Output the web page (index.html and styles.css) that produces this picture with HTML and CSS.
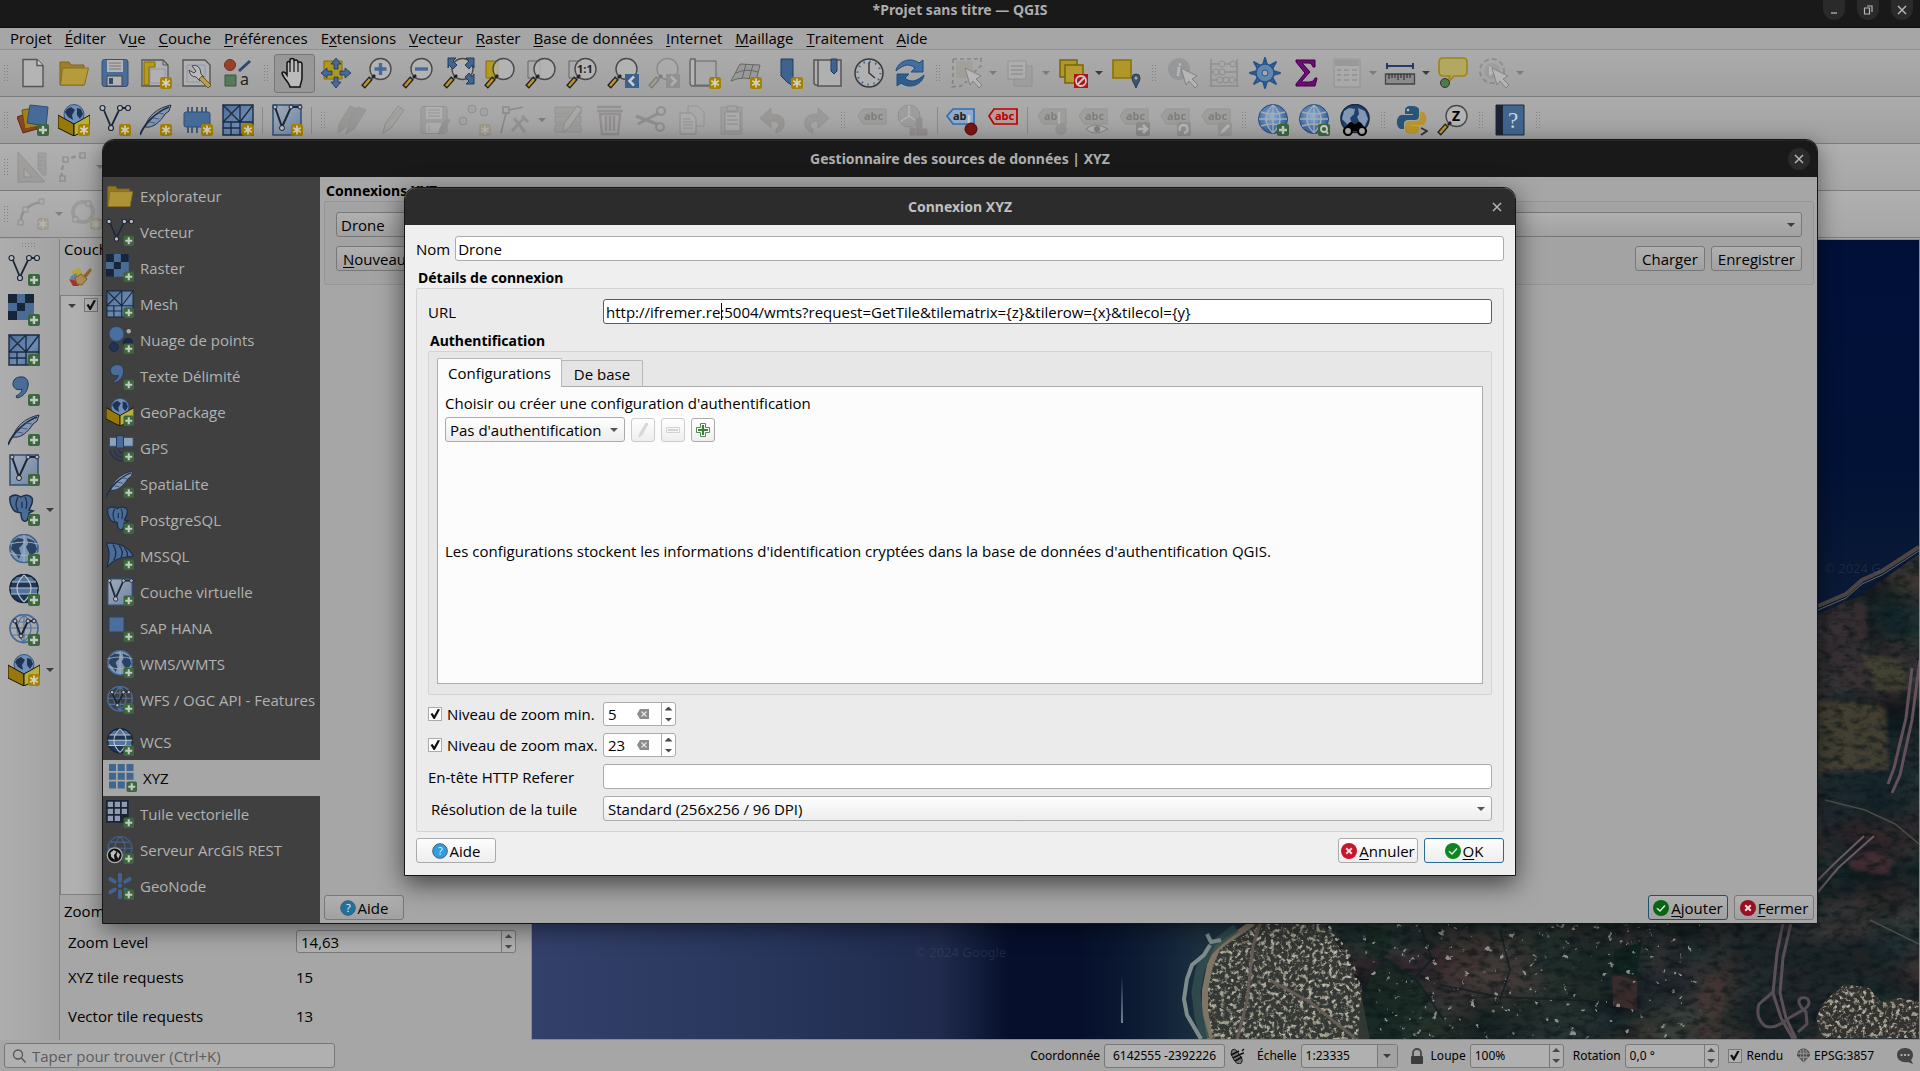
FILE: index.html
```html
<!DOCTYPE html>
<html lang="fr">
<head>
<meta charset="utf-8">
<title>*Projet sans titre — QGIS</title>
<link rel="stylesheet" href="styles.css">
</head>
<body>
<svg class="sprite" aria-hidden="true">
  <defs>
    <linearGradient id="g-blue" x1="0" y1="0" x2="1" y2="1"><stop offset="0" stop-color="#4a6c98"/><stop offset=".6" stop-color="#6d8bb0"/><stop offset="1" stop-color="#3f628e"/></linearGradient>
    <linearGradient id="g-pale" x1="0" y1="0" x2="1" y2="1"><stop offset="0" stop-color="#a3acb8"/><stop offset="1" stop-color="#6d84a4"/></linearGradient>
    <radialGradient id="g-globe" cx=".45" cy=".4" r=".6"><stop offset="0" stop-color="#8fb0d8"/><stop offset="1" stop-color="#2c5a92"/></radialGradient>
  </defs>

  <symbol id="b-plus" viewBox="0 0 32 32"><rect x="20" y="20" width="12" height="12" rx="2" fill="#3c663c"/><path d="M26 22v8M22 26h8" stroke="#c3cac3" stroke-width="2.4"/></symbol>
  <symbol id="b-star" viewBox="0 0 32 32"><rect x="20" y="20" width="12" height="12" rx="2.5" fill="#a58200"/><path d="M26 21.6v8.8M22.2 23.8l7.6 4.4M29.8 23.8l-7.6 4.4" stroke="#d3d0bd" stroke-width="1.8"/></symbol>

  <symbol id="i-new" viewBox="0 0 32 32"><path d="M6 2.500h14l6 6v21H6z" fill="#b4b4b4" stroke="#555" stroke-width="1.400"/><path d="M20 2.500v6h6" fill="#ccc" stroke="#555" stroke-width="1.400"/></symbol>
  <symbol id="i-open" viewBox="0 0 32 32"><path d="M2 28V5h9l2 3h13v20z" fill="#9e7f28" stroke="#7e651d"/><path d="M2.500 28l2-17h26l-4 17z" fill="#b59b3c" stroke="#86701f"/></symbol>
  <symbol id="i-save" viewBox="0 0 32 32"><rect x="3" y="2.500" width="26" height="27" rx="2.500" fill="#4a6c98" stroke="#35506f"/><path d="M8 3h16v12H8z" fill="#b3b3b3"/><path d="M10 6h12M10 9h12M10 12h12" stroke="#777"/><path d="M8 19h15v10H8z" fill="#b3b3b3" stroke="#444"/><path d="M10 21h4v6h-4z" fill="#2d4a70"/></symbol>
  <symbol id="i-saveoff" viewBox="0 0 32 32"><rect x="3" y="2.500" width="26" height="27" rx="2.500" fill="#8a8a8a" stroke="#666"/><path d="M8 3h16v12H8zM8 19h15v10H8z" fill="#c3c3c3"/><path d="M10 6h12M10 9h12M10 12h12M11 21v6" stroke="#777"/><path d="M20 31l2-7 6-10 4 2-6 11z" fill="#866" stroke="#777"/></symbol>
  <symbol id="i-layout" viewBox="0 0 32 32"><path d="M2 3h21l5 5v21H2z" fill="#b1b1b1" stroke="#555" stroke-width="1.300"/><path d="M10 12h15v14H10z" fill="none" stroke="#8c95b4"/><path d="M4 5h11v5H9v18H4z" fill="#b59b24" stroke="#7f6a00"/><path d="M23 3v5h5" fill="none" stroke="#555"/></symbol>
  <symbol id="i-wrench" viewBox="0 0 32 32"><path d="M2 3h22l5 5v21H2z" fill="#b1b1b1" stroke="#555" stroke-width="1.400"/><path d="M6 8h18v17H6z" fill="none" stroke="#8c95b4"/><path d="M11 9q5-2 8 3l1 5 3 3-4 4-4-4q-6 0-7-7l5 3 2-2z" fill="#bbb" stroke="#444"/><path d="M21 19l9 9-3 3-9-9z" fill="#b69d51" stroke="#6b5a25"/></symbol>
  <symbol id="i-style" viewBox="0 0 32 32"><circle cx="8" cy="8" r="5.500" fill="#94432a" stroke="#7a3018"/><path d="M17 14L28 4" stroke="#2d4a70" stroke-width="3"/><path d="M3 18h11v11H3z" fill="#56795a" stroke="#365a3a"/></symbol>
  <symbol id="i-hand" viewBox="0 0 32 32"><path d="M11 30c-1-5-7-9-8-14 1-2 3-1 5 2V6c0-2 3-2 3 0v-3c0-2 4-2 4 0v1c1-2 4-1 4 1v1c1-2 4-1 4 1v14c0 4-2 6-2 9z" fill="#bbb" stroke="#111" stroke-width="1.500"/><path d="M11 6v9M15 4v11M19 6v9" stroke="#111" stroke-width="1.200"/></symbol>
  <symbol id="i-pan" viewBox="0 0 32 32"><path d="M4 4h18v18H4z" fill="#b0981e" stroke="#846f00"/><path d="M16 1l5 6h-3v5h-4V7h-3zM16 31l5-6h-3v-5h-4v5h-3zM1 16l6-5v3h5v4H7v3zM31 16l-6-5v3h-5v4h5v3z" fill="#476b98" stroke="#1e3657" stroke-width=".800"/></symbol>
  <symbol id="i-lens" viewBox="0 0 32 32"><path d="M2 30l8-9" stroke="#222" stroke-width="5"/><path d="M3 29l6-7" stroke="#c29426" stroke-width="2.600"/><circle cx="19.500" cy="12" r="10.500" fill="#b7b7b7" fill-opacity=".75" stroke="#4a4a4a" stroke-width="1.400"/><path d="M11 21l3-3" stroke="#222" stroke-width="2.500"/></symbol>
  <symbol id="m-plus" viewBox="0 0 32 32"><path d="M19.500 6v12M13.500 12h12" stroke="#456b9b" stroke-width="3.400"/></symbol>
  <symbol id="m-minus" viewBox="0 0 32 32"><path d="M13 12h13" stroke="#456b9b" stroke-width="3.400"/></symbol>
  <symbol id="m-full" viewBox="0 0 32 32"><path d="M5 1h8l-3 3 4 4-4 4-4-4-1 3zM31 1h-8l3 3-4 4 4 4 3-4 2 3zM31 27h-8l3-3-4-4 4-4 3 4 2-3z" fill="#426590" stroke="#223c5e"/></symbol>
  <symbol id="m-sel" viewBox="0 0 32 32"><path d="M2 4h12v17H2z" fill="#b39c1d" stroke="#806e0a"/></symbol>
  <symbol id="m-lay" viewBox="0 0 32 32"><path d="M3 4h12v17H3z" fill="#aaa" stroke="#666"/></symbol>
  <symbol id="m-prev" viewBox="0 0 32 32"><path d="M18 17h14v14H18z" fill="#3b618f"/><path d="M27 19.500l-4.500 4.500 4.500 4.500" fill="none" stroke="#ccc" stroke-width="2.500"/></symbol>
  <symbol id="m-next" viewBox="0 0 32 32"><path d="M18 17h14v14H18z" fill="#666"/><path d="M23 19.500l4.500 4.500-4.500 4.500" fill="none" stroke="#ccc" stroke-width="2.500"/></symbol>
  <symbol id="i-map" viewBox="0 0 32 32"><path d="M6 4h21v24H6z" fill="#a9a9a9" stroke="#666"/><path d="M2 2h4v27H4q-3 0-3-3V4zM4 29h18" fill="#b3b3b3" stroke="#666" stroke-width="1.400"/></symbol>
  <symbol id="i-map3d" viewBox="0 0 32 32"><path d="M1 24L10 7l20 1-4 16q-12-6-25 0zM6 16q10-5 22-1M16 7l-4 15M23 8l-4 14" fill="#999" stroke="#666"/></symbol>
  <symbol id="i-mark" viewBox="0 0 32 32"><path d="M10 2h12v27l-6-4-6-6z" fill="#3f628f" stroke="#213c5e"/></symbol>
  <symbol id="i-marks" viewBox="0 0 32 32"><path d="M2 3h4v25H4q-2 0-2-3zM6 3h23v26H5" fill="#b0b0b0" stroke="#555" stroke-width="1.500"/><path d="M19 2h6v12l-3 3-3-3z" fill="#3f628f" stroke="#213c5e"/></symbol>
  <symbol id="i-clock" viewBox="0 0 32 32"><circle cx="16" cy="16" r="14" fill="#b1b1b1" stroke="#3b3b3b" stroke-width="1.500"/><circle cx="16" cy="16" r="11.500" fill="none" stroke="#3c669d" stroke-width="2" stroke-dasharray="1.500 4.520"/><path d="M16 5v11l6 5" fill="none" stroke="#333" stroke-width="1.400"/></symbol>
  <symbol id="i-refresh" viewBox="0 0 32 32"><path d="M2 14C3 5 16-1 25 6l4-3v12H17l4-4C14 5 8 9 2 14z" fill="#426f9f" stroke="#1f4c80"/><path d="M30 18c-1 9-14 15-23 8l-4 3V17h12l-4 4c7 6 13 2 19-3z" fill="#2f5c90" stroke="#1f4c80"/></symbol>
  <symbol id="i-cursor" viewBox="0 0 32 32"><path d="M14 11l5 17 3-4 6 7 3-3-6-6 5-3z" fill="#ddd" stroke="#333"/></symbol>
  <symbol id="i-selbox" viewBox="0 0 32 32"><path d="M5 4h17v17H5z" fill="#998f66"/><path d="M2 2h22l6-1v8l-7 6M2 2v20l-1 8 9-1 6-5" fill="none" stroke="#333" stroke-width="1.500" stroke-dasharray="4 3"/></symbol>
  <symbol id="i-forms" viewBox="0 0 32 32"><path d="M10 9h18v20H10z" fill="#99937c" stroke="#666"/><path d="M4 4h18v18H4z" fill="#bbb" stroke="#666"/><path d="M7 9h12M7 13h12M7 17h12" stroke="#777" stroke-width="2"/></symbol>
  <symbol id="i-desel" viewBox="0 0 32 32"><path d="M3 3h17v17H3z" fill="#ae9630" stroke="#7a6600" stroke-width="1.500"/><path d="M8 8h18v18H8z" fill="#b29b30" stroke="#7a6600" stroke-width="1.500"/><path d="M17 17h14v14H17z" fill="#b51414"/><circle cx="24" cy="24" r="5" fill="none" stroke="#ccc" stroke-width="1.800"/><path d="M20.500 27.500l7-7" stroke="#ccc" stroke-width="1.800"/></symbol>
  <symbol id="i-pinsq" viewBox="0 0 32 32"><path d="M3 3h18v18H3z" fill="#b09729" stroke="#8c7300" stroke-width="1.600"/><path d="M26 31c-2-5-4-7-4-10a4 4 0 018 0c0 3-2 5-4 10z" fill="#3a5670" stroke="#263c50"/><circle cx="26" cy="21" r="1.500" fill="#aaa"/></symbol>
  <symbol id="i-info" viewBox="0 0 32 32"><circle cx="12" cy="12" r="11" fill="#6c7480"/></symbol>
  <symbol id="i-abacus" viewBox="0 0 32 32"><path d="M3 2v26M29 2v26M3 7h26M3 15h26M3 23h26M1 29h30" fill="none" stroke="#555" stroke-width="1.500"/><g fill="#aaa" stroke="#555"><circle cx="14" cy="7" r="3"/><circle cx="25" cy="7" r="3"/><circle cx="8" cy="15" r="3"/><circle cx="14" cy="15" r="3"/><circle cx="12" cy="23" r="3"/><circle cx="18" cy="23" r="3"/><circle cx="24" cy="23" r="3"/></g></symbol>
  <symbol id="i-gear" viewBox="0 0 32 32"><path d="M16 1l2 7h-4zM16 31l2-7h-4zM1 16l7 2v-4zM31 16l-7 2v-4zM5 5l7 4-3 3zM27 5l-7 4 3 3zM5 27l7-4-3-3zM27 27l-7-4 3-3z" fill="#4a73a4" stroke="#28548b" stroke-width="2" stroke-linejoin="round"/><circle cx="16" cy="16" r="9" fill="#6285ae" stroke="#28548b" stroke-width="1.500"/><circle cx="16" cy="16" r="3" fill="#a9a9a9" stroke="#28548b"/></symbol>
  <symbol id="i-sigma" viewBox="0 0 32 32"><path d="M6 3h19v7h-2q-1-4-4-4h-7l8 9-9 10h9q4 0 5-4h2l-2 8H6v-2l9-11L6 5z" fill="#6f0a76" stroke="#3e0043"/></symbol>
  <symbol id="i-table" viewBox="0 0 32 32"><path d="M3 2h26v28H3z" fill="#b7b7b7" stroke="#666"/><path d="M4 3h24v6H4z" fill="#777"/><path d="M6 13h4M13 13h5M21 13h5M6 18h4M13 18h5M21 18h5M6 23h4M13 23h5M21 23h5" stroke="#777" stroke-width="2"/></symbol>
  <symbol id="i-ruler" viewBox="0 0 32 32"><path d="M3 9h26M3 6v6M29 6v6" stroke="#1f3d66" stroke-width="2"/><path d="M1.500 17h29v10h-29z" fill="#8b8b8b" stroke="#444" stroke-width="1.300"/><path d="M5 17v5M8 17v4M11 17v4M14 17v6M17 17v4M20 17v6M23 17v4M26 17v4" stroke="#222"/></symbol>
  <symbol id="i-tip" viewBox="0 0 32 32"><path d="M6 1h20q4 0 4 4v9q0 5-4 5h-9l-7 8 3-8H6q-4 0-4-5V5q0-4 4-4z" fill="#b3a85f" stroke="#9d8418" stroke-width="1.600"/><circle cx="8" cy="26" r="4.500" fill="#4f7a4c" stroke="#333"/></symbol>
  <symbol id="i-action" viewBox="0 0 32 32"><circle cx="14" cy="14" r="12" fill="none" stroke="#555" stroke-width="2" stroke-dasharray="5 3"/><circle cx="14" cy="14" r="8" fill="#888"/><path d="M11 9l8 5-8 5z" fill="#ddd"/></symbol>

  <symbol id="i-sources" viewBox="0 0 32 32"><path d="M0 13l14-5 6 17-14 4z" fill="#8d4322" stroke="#5f2810"/><path d="M5 6l18-3 3 18-18 4z" fill="#a5801e" stroke="#6d5300"/><path d="M13 1l18 2-2 19-19-3z" fill="#476b98" stroke="#2c4c74"/></symbol>
  <symbol id="i-gpkg" viewBox="0 0 32 32"><circle cx="16" cy="10.500" r="10" fill="#6f8fb8" stroke="#36567e"/><path d="M9 5l4-2 4 3-3 5 1 5-5-3-3-5zM19 4l4 1 2 5-3 5-3-4z" fill="#1f3354"/><path d="M0 11l16 9v12L0 24z" fill="#97780b" stroke="#151000"/><path d="M32 11l-16 9v12l16-8z" fill="#b5b040" stroke="#151000"/></symbol>
  <symbol id="i-vector" viewBox="0 0 32 32"><path d="M4 4l8 19L21 4h8" fill="none" stroke="#1c2838" stroke-width="1.800"/><g fill="#bbb" stroke="#1c2838" stroke-width="1.200"><circle cx="3.500" cy="4" r="2.500"/><circle cx="12" cy="24" r="2.500"/><circle cx="21" cy="4" r="2.500"/><circle cx="29" cy="4" r="2.500"/></g></symbol>
  <symbol id="i-feather" viewBox="0 0 32 32"><path d="M31 1C17 4 8 12 5 23c6 1 12-2 18-10l2-3 4-3z" fill="url(#g-pale)" stroke="#1f3048"/><path d="M0 31C4 20 16 8 29 3" fill="none" stroke="#1f3048" stroke-width="1.800"/><path d="M9 18l6 1M13 14l6 1M18 9l6 1" fill="none" stroke="#3f628e" stroke-width="1.200"/></symbol>
  <symbol id="i-chip" viewBox="0 0 32 32"><path d="M7 3v26M11 3v26M16 3v26M21 3v26M25 3v26" stroke="#223c60" stroke-width="1.400"/><rect x="3" y="8" width="26" height="15" rx="2" fill="#476b98" stroke="#2d4e78"/></symbol>
  <symbol id="i-mesh" viewBox="0 0 32 32"><path d="M1 1h30v30H1z" fill="url(#g-blue)" stroke="#1d2b42" stroke-width="1.400"/><path d="M1 18h30M18 1v30M1 1l17 17M18 1L1 18M31 1L18 18M1 24h17M9 18v13" fill="none" stroke="#1d2b42" stroke-width="1.400"/></symbol>
  <symbol id="i-virtual" viewBox="0 0 32 32"><path d="M2 1h28v30H2z" fill="url(#g-pale)" stroke="#2f4e78" stroke-width="1.500"/><path d="M4 3l7 20L20 3h9" fill="none" stroke="#1c2838" stroke-width="2"/><g fill="#bbb" stroke="#1c2838"><circle cx="4" cy="3" r="2"/><circle cx="11" cy="24" r="2.500"/><circle cx="20" cy="3" r="2"/><circle cx="29" cy="3" r="2"/></g></symbol>
  <symbol id="i-pencil" viewBox="0 0 32 32"><path d="M6 29l2-9L21 2l6 4-13 18z" fill="#9a9a86" stroke="#555"/><path d="M11 19L24 4" stroke="#777"/></symbol>
  <symbol id="i-pencils" viewBox="0 0 32 32"><path d="M2 29l1-9L14 2l7 3L9 24zM10 30l2-9L22 3l8 3L18 25z" fill="#80756c" stroke="#666"/></symbol>
  <symbol id="i-points" viewBox="0 0 32 32"><g fill="#999" stroke="#555"><circle cx="13" cy="5" r="4"/><circle cx="25" cy="8" r="4"/><circle cx="4" cy="17" r="4"/></g></symbol>
  <symbol id="i-vertex" viewBox="0 0 32 32"><path d="M3 3h6v6H3zM9 6l14-3M6 9L1 29" fill="none" stroke="#444" stroke-width="1.500"/><path d="M12 27l12-13M22 12l6 6M14 14l11 14" stroke="#666" stroke-width="3"/></symbol>
  <symbol id="i-attr" viewBox="0 0 32 32"><path d="M2 3h26v7H2zM2 12h26v7H2zM2 21h26v7H2z" fill="#8a8a6c" stroke="#666"/><path d="M10 28l1-8L24 2l5 3-13 19z" fill="#aaa" stroke="#555"/></symbol>
  <symbol id="i-trash" viewBox="0 0 32 32"><path d="M3 3h24M3 7h26M6 10h20l-2 20H8zM12 12v15M16 12v15M20 12v15" fill="none" stroke="#7a5656" stroke-width="2.400"/></symbol>
  <symbol id="i-cut" viewBox="0 0 32 32"><path d="M1 12l21 8M3 20L24 9" stroke="#555" stroke-width="3"/><g fill="none" stroke="#555" stroke-width="2"><circle cx="26" cy="7" r="4"/><circle cx="25" cy="23" r="4"/></g></symbol>
  <symbol id="i-copy" viewBox="0 0 32 32"><path d="M12 2h10l6 6v14H12z" fill="#aaa" stroke="#666"/><path d="M4 9h11l5 5v16H4z" fill="#b5b5b5" stroke="#555"/><path d="M7 15h7M7 18h10M7 21h10M7 24h10" stroke="#666"/></symbol>
  <symbol id="i-paste" viewBox="0 0 32 32"><path d="M4 3h21v27H4z" fill="#8b8b77" stroke="#666"/><path d="M8 8h15v19H8z" fill="#b5b5b5" stroke="#555"/><path d="M10 2h10v5H10zM10 12h9M10 16h11M10 20h11" fill="#999" stroke="#555"/></symbol>
  <symbol id="i-undo" viewBox="0 0 32 32"><path d="M2 14L13 4v6c10 0 14 4 13 11-1 5-5 7-8 8v-4c6-4 2-8-5-8v7z" fill="#876f62" stroke="#666"/></symbol>
  <symbol id="i-redo" viewBox="0 0 32 32"><path d="M30 14L19 4v6C9 10 5 14 6 21c1 5 5 7 8 8v-4c-6-4-2-8 5-8v7z" fill="#6c8272" stroke="#666"/></symbol>
  <symbol id="i-tag" viewBox="0 0 32 32"><path d="M2 12l5-7h23v15H7z" fill="#8f8b72" stroke="#666"/></symbol>
  <symbol id="i-tagred" viewBox="0 0 32 32"><path d="M2 12l5-7h23v15H7z" fill="#b89a9a" stroke="#b80000" stroke-width="1.700"/></symbol>
  <symbol id="i-tagpin" viewBox="0 0 32 32"><path d="M1 12l6-7h21v15H7z" fill="#8faac8" stroke="#2f6db8" stroke-width="1.700"/></symbol>
  <symbol id="b-pin" viewBox="0 0 32 32"><path d="M23 11v11" stroke="#ccc" stroke-width="2.500"/><circle cx="25" cy="25" r="6" fill="#7b1414" stroke="#4a0808"/></symbol>
  <symbol id="i-pie" viewBox="0 0 32 32"><circle cx="12" cy="12" r="11" fill="#7d8c7d" stroke="#555"/><path d="M12 12V1M12 12l9 6M12 12l-9 6" stroke="#eee"/><path d="M13 24h5v7h-5zM19 14h6v17h-6zM25 25h5v6h-5z" fill="#855" stroke="#666"/></symbol>
  <symbol id="b-drop" viewBox="0 0 32 32"><circle cx="25" cy="25" r="6" fill="#777"/><path d="M23 8v12" stroke="#ccc" stroke-width="2"/></symbol>
  <symbol id="b-eye" viewBox="0 0 32 32"><path d="M9 25q8-8 22 0-14 8-22 0z" fill="#ccc" stroke="#333"/><circle cx="20" cy="25" r="3" fill="#333"/></symbol>
  <symbol id="b-arrow" viewBox="0 0 32 32"><rect x="18" y="18" width="14" height="14" rx="2" fill="#555"/><path d="M20 25h7M25 21l4 4-4 4" stroke="#ddd" stroke-width="2.500" fill="none"/></symbol>
  <symbol id="b-rot" viewBox="0 0 32 32"><rect x="18" y="18" width="14" height="14" rx="2" fill="#666"/><path d="M21 27a4 4 0 114 2" stroke="#ddd" stroke-width="2.500" fill="none"/></symbol>
  <symbol id="b-edit" viewBox="0 0 32 32"><rect x="18" y="18" width="14" height="14" rx="2" fill="#777"/><path d="M20 30l2-4 6-6 2 2-6 6z" fill="#ddd"/></symbol>
  <symbol id="b-find" viewBox="0 0 32 32"><rect x="20" y="20" width="12" height="12" rx="2" fill="#3c663c"/><circle cx="26" cy="25" r="3" fill="none" stroke="#ccc" stroke-width="1.800"/><path d="M28 27l2 3" stroke="#ccc" stroke-width="1.800"/></symbol>
  <symbol id="b-bino" viewBox="0 0 32 32"><path d="M9 20q3-4 6 0h2q3-4 6 0l5 7H4z" fill="#000"/><circle cx="9" cy="27" r="4" fill="#aaa" stroke="#000" stroke-width="2.200"/><circle cx="23" cy="27" r="4" fill="#aaa" stroke="#000" stroke-width="2.200"/></symbol>
  <symbol id="i-globe" viewBox="0 0 32 32"><circle cx="16" cy="15" r="14.500" fill="url(#g-globe)" stroke="#2c4d78"/><path d="M16 1v28M2 15h28M4 8q12 4 24 0M4 22q12-4 24 0M16 1q-14 14 0 28M16 1q14 14 0 28" fill="none" stroke="#a4adb8" stroke-width="1.400"/></symbol>
  <symbol id="i-world" viewBox="0 0 32 32"><circle cx="16" cy="14.500" r="14" fill="#7f97b5" stroke="#3f628f" stroke-width="1.600"/><path d="M5 7l5-3 6 1-1 5-4 4 2 6-2 5-4-6-4-4zM19 4l7 3 3 8-4 9-4-5-3-6 2-3z" fill="#2b4262"/><path d="M2 19q14 5 28 0M2 10q14-4 28 0M16 1v27" fill="none" stroke="#a9b4c2" stroke-width=".900"/></symbol>
  <symbol id="i-metaworld" viewBox="0 0 32 32"><circle cx="16" cy="14.500" r="14" fill="#22406a" stroke="#152b49" stroke-width="1.600"/><path d="M5 7l5-3 6 1-1 5-4 4 2 6-2 5-4-6-4-4zM19 4l7 3 3 8-4 9-4-5-3-6 2-3z" fill="#8197b3"/></symbol>
  <symbol id="i-worlddark" viewBox="0 0 32 32"><circle cx="16" cy="14.500" r="14" fill="#1f3553" stroke="#15253c" stroke-width="1.600"/><path d="M9 3h14l5 5H4zM3 14h26v6H3z" fill="#5474a0"/><path d="M2 14h28M4 8h24M3 20h26M16 1q-14 13 0 27M16 1q14 13 0 27" fill="none" stroke="#bcc4cc" stroke-width="1.200"/></symbol>
  <symbol id="i-wfs" viewBox="0 0 32 32"><circle cx="16" cy="14.500" r="14" fill="none" stroke="#456a98" stroke-width="1.800"/><path d="M2 14h28M4 8h24M4 21h24M16 1q-14 13 0 27M16 1q14 13 0 27M16 1v27" fill="none" stroke="#55759f" stroke-width="1.200"/><path d="M7 7l6 15L20 7h6" fill="none" stroke="#1c2430" stroke-width="2"/><g fill="#bbb" stroke="#1c2430"><circle cx="7" cy="7" r="2"/><circle cx="13" cy="22" r="2"/><circle cx="20" cy="7" r="2"/><circle cx="26" cy="7" r="2"/></g></symbol>
  <symbol id="i-python" viewBox="0 0 32 32"><path d="M15 2c-5 0-6 2-6 5v3h8v1H5c-6 2-5 13 0 14h3v-5c0-3 2-4 4-4h7c2 0 4-1 4-4V6c0-3-3-4-8-4z" fill="#285478"/><path d="M17 30c5 0 6-2 6-5v-3h-8v-1h12c5-2 4-12 0-13h-3v5c0 3-2 4-4 4h-7c-2 0-4 1-4 4v5c0 3 3 4 8 4z" fill="#b8952c"/><circle cx="12" cy="6" r="1.300" fill="#bbb"/><path d="M25 24l6 3-6 4" fill="none" stroke="#333" stroke-width="1.800"/></symbol>
  <symbol id="i-book" viewBox="0 0 32 32"><path d="M2 1h28v30H2z" fill="#40658f" stroke="#1d2a3c"/><path d="M2 1h7v30H2z" fill="#1a2433"/></symbol>
  <symbol id="i-triangle" viewBox="0 0 32 32"><path d="M1 1v30h27zM7 17v9h8z" fill="#8c8078" fill-rule="evenodd" stroke="#555"/><path d="M21 2h8v22h-3L21 18zM22 6h4M22 10h4M22 14h4M22 18h4" fill="#8c8078" stroke="#666"/></symbol>
  <symbol id="i-arc" viewBox="0 0 32 32"><path d="M4 27C2 14 8 5 24 5" fill="none" stroke="#555" stroke-width="2.500" stroke-dasharray="5 3"/><path d="M2 25h5v5H2zM5 6h5v5H5zM22 2h5v5h-5z" fill="#aaa" stroke="#555" stroke-width="1.500"/></symbol>
  <symbol id="i-curve" viewBox="0 0 32 32"><path d="M4 25C3 14 10 7 24 4" fill="none" stroke="#555" stroke-width="2.500"/><path d="M1 22h5v5H1zM6 9h5v5H6zM22 1h5v5h-5z" fill="#aaa" stroke="#555"/></symbol>
  <symbol id="i-ring" viewBox="0 0 32 32"><circle cx="13" cy="14" r="10" fill="none" stroke="#777" stroke-width="4"/><path d="M16 3h5v5h-5zM3 19h5v5H3z" fill="#aaa" stroke="#555"/></symbol>

  <symbol id="i-raster" viewBox="0 0 32 32"><path d="M0 0h26v26H0z" fill="#4a6b96"/><path d="M0 0h9v9H0zM17 0h9v9h-9zM9 9h8v8H9zM0 17h9v9H0z" fill="#172538"/></symbol>
  <symbol id="i-cloud" viewBox="0 0 32 32"><circle cx="12" cy="9" r="8.500" fill="#4a6e9e" stroke="#2b4566"/><circle cx="26" cy="6" r="2.500" fill="#aab"/><circle cx="25" cy="19" r="6" fill="#1b2a42"/><circle cx="9" cy="24" r="5" fill="#1f3556" stroke="#16263e"/></symbol>
  <symbol id="i-comma" viewBox="0 0 32 32"><path d="M12 3c6-1 9 4 8 9-1 7-6 11-11 12l-1-2c3-1 6-4 6-7-5 2-9-1-9-5 0-4 3-7 7-7z" fill="#4a6c98" stroke="#22374f"/></symbol>
  <symbol id="i-elephant" viewBox="0 0 32 32"><path d="M2 3c5-4 9-1 11 0 4-3 9-2 11 1 2 5-2 9-3 12l4 1-4 2c-1 5-1 9-5 8-3-1-3-5-3-8l-4-1c-4 0-8-9-7-15z" fill="#4a6c98" stroke="#1f3048" stroke-width="1.500"/><path d="M10 3q-4 8 0 14M17 3q3 4 1 12M14 8v6" fill="none" stroke="#1f3048" stroke-width="1.300"/></symbol>
  <symbol id="i-folder" viewBox="0 0 32 32"><path d="M2 28V5h9l2 3h14v20z" fill="#93761f" stroke="#7e651d"/><path d="M2.500 28l2-17h26l-3 17z" fill="#ae9336" stroke="#86701f"/></symbol>
  <symbol id="i-sat" viewBox="0 0 32 32"><path d="M4 4h8v10H4zM20 4h11v10H20z" fill="#8da1b8" stroke="#2f4e78"/><path d="M12 2h8v14h-8z" fill="#4a6c98" stroke="#1f3556"/><path d="M4 18q2 11 15 13M9 18q1 7 10 9M14 18q1 3 6 4" fill="none" stroke="#23364f" stroke-width="1.800"/></symbol>
  <symbol id="i-mssql" viewBox="0 0 32 32"><path d="M0 1c14 0 26 4 31 15l-13 2C10 20 5 24 1 29 4 20 5 10 0 1z" fill="#4a6c98" stroke="#1f3048" stroke-width="1.400"/><path d="M8 3q6 8 1 18M15 4q6 7 2 14M21 7q5 5 3 10" fill="none" stroke="#1f3048" stroke-width="1.600"/></symbol>
  <symbol id="i-hana" viewBox="0 0 32 32"><path d="M1 1h22v22H1z" fill="none" stroke="#2d4159" stroke-width="2" stroke-dasharray="2 2"/><path d="M4 4h16v16H4z" fill="#4a6e9e"/></symbol>
  <symbol id="i-xyz" viewBox="0 0 32 32"><path d="M0 0h8v8H0zM10 0h8v8h-8zM20 0h8v8h-8zM0 10h8v8H0zM10 10h8v8h-8zM20 10h8v8h-8zM0 20h8v8H0zM10 20h8v8h-8z" fill="#40678f"/></symbol>
  <symbol id="i-vtile" viewBox="0 0 32 32"><path d="M0 0h26v26H0z" fill="#1a2433"/><path d="M2 2h6v6H2zM10 2h6v6h-6zM18 2h6v6h-6zM2 10h6v6H2zM10 10h6v6h-6zM18 10h6v6h-6zM2 18h6v6H2zM10 18h6v6h-6z" fill="#8f9bb0"/></symbol>
  <symbol id="i-arcgis" viewBox="0 0 32 32"><circle cx="16" cy="14" r="13.500" fill="none" stroke="#3c5c86" stroke-width="1.600"/><path d="M2 14h28M5 7h22M16 1q12 12 0 26M16 1q-12 12 0 26" fill="none" stroke="#46658e" stroke-width="1.200"/><circle cx="10" cy="22" r="8.500" fill="#111" stroke="#aaa" stroke-width="1.500"/><path d="M5 19l4-3 3 2-3 4 1 5-4-3zM13 18l3 3-2 5-2-4z" fill="#bbb"/></symbol>
  <symbol id="i-geonode" viewBox="0 0 32 32"><path d="M16 3v7M16 22v7M5 8l5 3M27 8l-5 3M5 23l5-3M27 23l-5-3" stroke="#40638f" stroke-width="4.500" stroke-linecap="round"/><circle cx="16" cy="15.500" r="2.500" fill="#40638f"/></symbol>
  <symbol id="i-help" viewBox="0 0 16 16"><circle cx="8" cy="8" r="7.300" fill="currentColor" stroke="#3b6078"/></symbol>
  <symbol id="i-ok" viewBox="0 0 16 16"><circle cx="8" cy="8" r="8" fill="currentColor"/><path d="M4 8.200l3 2.800 5-5.500" fill="none" stroke="#fff" stroke-opacity=".85" stroke-width="1.500"/></symbol>
  <symbol id="i-no" viewBox="0 0 16 16"><circle cx="8" cy="8" r="8" fill="currentColor"/><path d="M5.200 5.200l5.600 5.600M10.800 5.200l-5.600 5.600" stroke="#fff" stroke-opacity=".85" stroke-width="2"/></symbol>
  <symbol id="i-close" viewBox="0 0 16 16"><path d="M4 4l8 8M12 4l-8 8" stroke="currentColor" stroke-width="1.500"/></symbol>
  <symbol id="i-clear" viewBox="0 0 14 12"><path d="M4 1h9v10H4L1 6z" fill="#8c8c8c"/><path d="M5.500 3.500l5 5M10.500 3.500l-5 5" stroke="#e8e8e8" stroke-width="1.200"/></symbol>
</svg>

<header class="titlebar">
  <h1 class="title">*Projet sans titre — QGIS</h1>
  <div class="controls">
    <button class="round" aria-label="Réduire"><svg viewBox="0 0 16 16"><path d="M5 11h6" stroke="currentColor" stroke-width="1.300"/></svg></button>
    <button class="round" aria-label="Restaurer"><svg viewBox="0 0 16 16"><path d="M4.500 6h5v6h-5zM7 4h5v6" fill="none" stroke="currentColor" stroke-width="1.200"/></svg></button>
    <button class="round" aria-label="Quitter"><svg><use href="#i-close"/></svg></button>
  </div>
</header>

<nav class="menubar">
  <a href="#">Pro<u>j</u>et</a><a href="#"><u>É</u>diter</a><a href="#">V<u>u</u>e</a><a href="#"><u>C</u>ouche</a><a href="#"><u>P</u>références</a><a href="#">E<u>x</u>tensions</a><a href="#"><u>V</u>ecteur</a><a href="#"><u>R</u>aster</a><a href="#"><u>B</u>ase de données</a><a href="#"><u>I</u>nternet</a><a href="#"><u>M</u>aillage</a><a href="#"><u>T</u>raitement</a><a href="#"><u>A</u>ide</a>
</nav>

<div class="toolbar">
  <i class="grip"></i>
  <button class="tool" aria-label="Nouveau"><svg><use href="#i-new"/></svg></button>
  <button class="tool" aria-label="Ouvrir"><svg><use href="#i-open"/></svg></button>
  <button class="tool" aria-label="Enregistrer le projet"><svg><use href="#i-save"/></svg></button>
  <button class="tool" aria-label="Nouvelle mise en page"><svg><use href="#i-layout"/><use href="#b-star"/></svg></button>
  <button class="tool" aria-label="Gestionnaire de mise en page"><svg><use href="#i-wrench"/></svg></button>
  <button class="tool" aria-label="Gestionnaire de style"><svg><use href="#i-style"/><text class="letter" x="18" y="28">a</text></svg></button>
  <i class="grip"></i>
  <button class="tool on" aria-label="Se déplacer"><svg><use href="#i-hand"/></svg></button>
  <button class="tool" aria-label="Déplacer vers la sélection"><svg><use href="#i-pan"/></svg></button>
  <button class="tool" aria-label="Zoom +"><svg><use href="#i-lens"/><use href="#m-plus"/></svg></button>
  <button class="tool" aria-label="Zoom -"><svg><use href="#i-lens"/><use href="#m-minus"/></svg></button>
  <button class="tool" aria-label="Zoom sur l'emprise"><svg><use href="#i-lens"/><use href="#m-full"/></svg></button>
  <button class="tool" aria-label="Zoom sur la sélection"><svg><use href="#m-sel"/><use href="#i-lens"/></svg></button>
  <button class="tool" aria-label="Zoom sur la couche"><svg><use href="#m-lay"/><use href="#i-lens"/></svg></button>
  <button class="tool" aria-label="Résolution native"><svg><use href="#m-lay"/><use href="#i-lens"/><text class="tagtext" x="11" y="16">1:1</text></svg></button>
  <button class="tool" aria-label="Zoom précédent"><svg><use href="#i-lens"/><use href="#m-prev"/></svg></button>
  <button class="tool off" aria-label="Zoom suivant" disabled><svg><use href="#i-lens"/><use href="#m-next"/></svg></button>
  <button class="tool" aria-label="Nouvelle vue"><svg><use href="#i-map"/><use href="#b-star"/></svg></button>
  <button class="tool" aria-label="Nouvelle vue 3D"><svg><use href="#i-map3d"/><use href="#b-star"/></svg></button>
  <button class="tool" aria-label="Nouveau signet"><svg><use href="#i-mark"/><use href="#b-star"/></svg></button>
  <button class="tool" aria-label="Signets"><svg><use href="#i-marks"/></svg></button>
  <button class="tool" aria-label="Contrôleur temporel"><svg><use href="#i-clock"/></svg></button>
  <button class="tool" aria-label="Rafraîchir"><svg><use href="#i-refresh"/></svg></button>
  <i class="grip"></i>
  <button class="tool off" aria-label="Sélectionner" disabled><svg><use href="#i-selbox"/><use href="#i-cursor"/></svg></button><i class="drop off"></i>
  <button class="tool off" aria-label="Sélection par valeur" disabled><svg><use href="#i-forms"/></svg></button><i class="drop off"></i>
  <button class="tool" aria-label="Désélectionner"><svg><use href="#i-desel"/></svg></button><i class="drop"></i>
  <button class="tool" aria-label="Sélection par localisation"><svg><use href="#i-pinsq"/></svg></button>
  <i class="grip"></i>
  <button class="tool off" aria-label="Identifier" disabled><svg><use href="#i-info"/><text class="infotext" x="9" y="19">i</text><use href="#i-cursor"/></svg></button>
  <button class="tool off" aria-label="Calculatrice" disabled><svg><use href="#i-abacus"/></svg></button>
  <button class="tool" aria-label="Boîte à outils"><svg><use href="#i-gear"/></svg></button>
  <button class="tool" aria-label="Statistiques"><svg><use href="#i-sigma"/></svg></button>
  <button class="tool off" aria-label="Table d'attributs" disabled><svg><use href="#i-table"/></svg></button><i class="drop off"></i>
  <button class="tool" aria-label="Mesurer"><svg><use href="#i-ruler"/></svg></button><i class="drop"></i>
  <button class="tool" aria-label="Infobulles"><svg><use href="#i-tip"/></svg></button>
  <button class="tool off" aria-label="Action" disabled><svg><use href="#i-action"/><use href="#i-cursor"/></svg></button><i class="drop off"></i>
</div>

<div class="toolbar">
  <i class="grip"></i>
  <button class="tool" aria-label="Sources de données"><svg><use href="#i-sources"/><use href="#b-plus"/></svg></button>
  <button class="tool" aria-label="Nouveau GeoPackage"><svg><use href="#i-gpkg"/><use href="#b-star"/></svg></button>
  <button class="tool" aria-label="Nouveau Shapefile"><svg><use href="#i-vector"/><use href="#b-star"/></svg></button>
  <button class="tool" aria-label="Nouvelle SpatiaLite"><svg><use href="#i-feather"/><use href="#b-star"/></svg></button>
  <button class="tool" aria-label="Couche temporaire"><svg><use href="#i-chip"/><use href="#b-star"/></svg></button>
  <button class="tool" aria-label="Nouveau maillage"><svg><use href="#i-mesh"/><use href="#b-star"/></svg></button>
  <i class="rule"></i>
  <button class="tool" aria-label="Nouvelle couche virtuelle"><svg><use href="#i-virtual"/><use href="#b-star"/></svg></button>
  <i class="rule"></i>
  <i class="grip"></i>
  <button class="tool off" aria-label="Modifications en cours" disabled><svg><use href="#i-pencils"/></svg></button>
  <button class="tool off" aria-label="Mode édition" disabled><svg><use href="#i-pencil"/></svg></button>
  <button class="tool off" aria-label="Enregistrer les modifications" disabled><svg><use href="#i-saveoff"/></svg></button>
  <button class="tool off" aria-label="Ajouter des points" disabled><svg><use href="#i-points"/><use href="#b-star"/></svg></button>
  <button class="tool off" aria-label="Outil de nœud" disabled><svg><use href="#i-vertex"/></svg></button><i class="drop off"></i>
  <button class="tool off" aria-label="Modifier les attributs" disabled><svg><use href="#i-attr"/></svg></button>
  <button class="tool off" aria-label="Supprimer" disabled><svg><use href="#i-trash"/></svg></button>
  <button class="tool off" aria-label="Couper" disabled><svg><use href="#i-cut"/></svg></button>
  <button class="tool off" aria-label="Copier" disabled><svg><use href="#i-copy"/></svg></button>
  <button class="tool off" aria-label="Coller" disabled><svg><use href="#i-paste"/></svg></button>
  <button class="tool off" aria-label="Annuler l'action" disabled><svg><use href="#i-undo"/></svg></button>
  <button class="tool off" aria-label="Rétablir" disabled><svg><use href="#i-redo"/></svg></button>
  <i class="grip"></i>
  <button class="tool off" aria-label="Étiquettes" disabled><svg><use href="#i-tag"/><text class="tagtext" x="8" y="16">abc</text></svg></button>
  <button class="tool off" aria-label="Diagrammes" disabled><svg><use href="#i-pie"/></svg></button>
  <i class="rule"></i>
  <button class="tool" aria-label="Étiquettes épinglées"><svg><use href="#i-tagpin"/><text class="tagtext" x="7" y="16">ab</text><use href="#b-pin"/></svg></button>
  <button class="tool" aria-label="Étiquettes non placées"><svg><use href="#i-tagred"/><text class="tagtext red" x="8" y="16">abc</text></svg></button>
  <i class="rule"></i>
  <button class="tool off" aria-label="Épingler" disabled><svg><use href="#i-tag"/><text class="tagtext" x="8" y="16">ab</text><use href="#b-drop"/></svg></button>
  <button class="tool off" aria-label="Afficher les étiquettes" disabled><svg><use href="#i-tag"/><text class="tagtext" x="8" y="16">abc</text><use href="#b-eye"/></svg></button>
  <button class="tool off" aria-label="Déplacer l'étiquette" disabled><svg><use href="#i-tag"/><text class="tagtext" x="8" y="16">abc</text><use href="#b-arrow"/></svg></button>
  <button class="tool off" aria-label="Pivoter l'étiquette" disabled><svg><use href="#i-tag"/><text class="tagtext" x="8" y="16">abc</text><use href="#b-rot"/></svg></button>
  <button class="tool off" aria-label="Modifier l'étiquette" disabled><svg><use href="#i-tag"/><text class="tagtext" x="8" y="16">abc</text><use href="#b-edit"/></svg></button>
  <i class="grip"></i>
  <button class="tool" aria-label="Ajouter un service"><svg><use href="#i-globe"/><use href="#b-plus"/></svg></button>
  <button class="tool" aria-label="Chercher un service"><svg><use href="#i-globe"/><use href="#b-find"/></svg></button>
  <button class="tool" aria-label="MetaSearch"><svg><use href="#i-metaworld"/><use href="#b-bino"/></svg></button>
  <i class="grip"></i>
  <button class="tool" aria-label="Console Python"><svg><use href="#i-python"/></svg></button>
  <button class="tool" aria-label="Niveau de zoom"><svg><use href="#i-lens"/><text class="letter bold" x="15" y="17">Z</text></svg></button>
  <i class="grip"></i>
  <button class="tool" aria-label="Aide de QGIS"><svg><use href="#i-book"/><text class="booktext" x="14" y="24">?</text></svg></button>
  <i class="grip"></i>
</div>

<div class="toolbar">
  <i class="grip"></i>
  <button class="tool off" aria-label="Outils avancés" disabled><svg><use href="#i-triangle"/></svg></button>
  <button class="tool off" aria-label="Tracer" disabled><svg><use href="#i-arc"/></svg></button><i class="drop off"></i>
</div>
<div class="toolbar">
  <i class="grip"></i>
  <button class="tool off" aria-label="Arc" disabled><svg><use href="#i-curve"/><use href="#b-star"/></svg></button><i class="drop off"></i>
  <button class="tool off" aria-label="Cercle" disabled><svg><use href="#i-ring"/><use href="#b-star"/></svg></button>
</div>

<main class="workspace">
  <aside class="rail">
    <i class="hgrip"></i>
    <button class="railtool" aria-label="Couche vecteur"><svg><use href="#i-vector"/><use href="#b-plus"/></svg></button>
    <button class="railtool" aria-label="Couche raster"><svg><use href="#i-raster"/><use href="#b-plus"/></svg></button>
    <button class="railtool" aria-label="Couche maillage"><svg><use href="#i-mesh"/><use href="#b-plus"/></svg></button>
    <button class="railtool" aria-label="Texte délimité"><svg><use href="#i-comma"/><use href="#b-plus"/></svg></button>
    <button class="railtool" aria-label="SpatiaLite"><svg><use href="#i-feather"/><use href="#b-plus"/></svg></button>
    <button class="railtool" aria-label="Couche virtuelle"><svg><use href="#i-virtual"/><use href="#b-plus"/></svg></button>
    <div class="railrow"><button class="railtool" aria-label="PostGIS"><svg><use href="#i-elephant"/><use href="#b-plus"/></svg></button><i class="drop"></i></div>
    <button class="railtool" aria-label="WMS"><svg><use href="#i-world"/><use href="#b-plus"/></svg></button>
    <button class="railtool" aria-label="WCS"><svg><use href="#i-worlddark"/><use href="#b-plus"/></svg></button>
    <button class="railtool" aria-label="WFS"><svg><use href="#i-wfs"/><use href="#b-plus"/></svg></button>
    <div class="railrow"><button class="railtool" aria-label="GeoPackage"><svg><use href="#i-gpkg"/><use href="#b-star"/></svg></button><i class="drop"></i></div>
  </aside>

  <section class="docks">
    <h2 class="docktitle">Couches</h2>
    <div class="docktools"><svg viewBox="0 0 24 20"><path d="M2 4l8-3 5 7-9 3z" fill="#b5a63a"/><path d="M1 10l6-4 3 7-6 4z" fill="#6680a0"/><path d="M0 12l8 2 2 5-6 0z" fill="#a83030"/><path d="M6 11l6-4 6 5-5 6-5-1z" fill="#b08a52" stroke="#7d5e2c"/><path d="M14 9l7-8 2 2-6 8z" fill="#93642c"/></svg></div>
    <div class="tree"><i class="drop"></i><input class="check" type="checkbox" checked aria-label="Afficher la couche"></div>
    <h2 class="docktitle low">Zoom Level</h2>
    <div class="props">
      <label for="zl">Zoom Level</label>
      <div class="spin wide"><input id="zl" type="text" value="14,63"><span class="steps"><button aria-label="Augmenter"></button><button aria-label="Diminuer"></button></span></div>
      <span>XYZ tile requests</span><span>15</span>
      <span>Vector tile requests</span><span>13</span>
    </div>
  </section>

  <section class="map" aria-label="Carte">
    <svg class="mapdraw" viewBox="532 239 1387 800" preserveAspectRatio="xMaxYMax slice">
      <defs>
        <linearGradient id="sea" x1="532" x2="1010" y1="0" y2="0" gradientUnits="userSpaceOnUse"><stop offset="0" stop-color="#33406a"/><stop offset=".5" stop-color="#28365c"/><stop offset=".85" stop-color="#202b4d"/><stop offset="1" stop-color="#06102c"/></linearGradient>
        <linearGradient id="deep" x1="0" x2="0" y1="239" y2="620" gradientUnits="userSpaceOnUse"><stop offset="0" stop-color="#00103a"/><stop offset=".6" stop-color="#021236"/><stop offset="1" stop-color="#0c1b34"/></linearGradient>
        <linearGradient id="shelf" x1="1080" x2="1200" y1="0" y2="0" gradientUnits="userSpaceOnUse"><stop offset="0" stop-color="#0d2038" stop-opacity="0"/><stop offset="1" stop-color="#1c3040"/></linearGradient>
        <filter id="earth" x="0" y="0" width="1" height="1" color-interpolation-filters="sRGB"><feTurbulence type="fractalNoise" baseFrequency=".012 .02" numOctaves="7" seed="11"/><feColorMatrix values=".3 .06 0 0 -.02  .17 .18 0 0 0  .13 .13 .06 0 .02  0 0 0 0 1"/><feComposite in2="SourceGraphic" operator="in"/></filter>
        <filter id="grain" x="0" y="0" width="1" height="1" color-interpolation-filters="sRGB"><feTurbulence type="fractalNoise" baseFrequency=".09 .16" numOctaves="4" seed="4"/><feColorMatrix values="0 0 0 0 .04  0 0 0 0 .08  0 0 0 0 .09  0 3 0 0 -1.300"/><feComposite in2="SourceGraphic" operator="in"/></filter>
        <filter id="roofs" x="0" y="0" width="1" height="1" color-interpolation-filters="sRGB"><feTurbulence type="fractalNoise" baseFrequency=".24" numOctaves="3" seed="8"/><feColorMatrix values=".3 0 .4 0 .22  .3 0 .4 0 .21  .2 0 .5 0 .17  5 0 0 0 -2.400"/><feComposite in2="SourceGraphic" operator="in"/></filter>
        <filter id="spots" x="0" y="0" width="1" height="1" color-interpolation-filters="sRGB"><feTurbulence type="fractalNoise" baseFrequency=".13" numOctaves="3" seed="21"/><feColorMatrix values="0 0 0 0 .56  0 0 0 0 .56  0 0 0 0 .54  12 0 0 0 -8.400"/><feComposite in2="SourceGraphic" operator="in"/></filter>
        <filter id="soft"><feGaussianBlur stdDeviation="2"/></filter>
        <filter id="blur"><feGaussianBlur stdDeviation="9"/></filter>
      </defs>
      <rect x="532" y="239" width="1387" height="800" fill="url(#sea)"/>
      <path d="M1500 239h419v400h-419z" fill="url(#deep)"/>
      <path d="M1080 920h170v120h-170z" fill="url(#shelf)"/>
      <path d="M1209 1040l-4-30 0-20 5-25 8-18 10-7 25-17L1500 780l318-166 40-17 61-43v486z" filter="url(#earth)"/>
      <g filter="url(#blur)" opacity=".6">
        <path d="M1530 920h90l10 60-60 60h-120z" fill="#1c2925"/><path d="M1725 930h60l80 20v70l-110 10z" fill="#152126"/><path d="M1820 720h99v110l-60-10-40 20z" fill="#19252d"/>
        <path d="M1450 930l70 10 20 50-40 10-50-20z" fill="#493c37"/><path d="M1350 1000l110 20v20h-110z" fill="#192a22"/>
      </g>
      <path d="M1818 702h54l14 8 3 60-71 2z" fill="#4b4536" opacity=".85" filter="url(#soft)"/>
      <path d="M1830 610l18-10 18 4 2 60-4 26-30-4-8-40z" fill="#3d3334" opacity=".7" filter="url(#soft)"/>
      <path d="M1862 655l40 5 8 30-34 2z" fill="#4c4a30" opacity=".7" filter="url(#soft)"/>
      <path d="M1850 858l22-8 22 10-6 14-40-4z" fill="#5b343a" opacity=".6" filter="url(#soft)"/>
      <path d="M1365 925l27 5-4 24-12 6-10-12z M1370 975l18-16 22 14 22 26-22 20-45-22z" fill="#1a2c23" opacity=".75"/>
      <path d="M1614 950l28-8-6 34-22-4z" fill="#10241f"/><path d="M1612 974l25 6 0 30-24-4z" fill="#3a2b2c"/>
      <path d="M1700 970l25 10-4 58h-22z" fill="#4a3733" opacity=".5"/>
      <path d="M1209 1040l-4-50 13-43 35-24L1500 780l318-166 101-60v486z" filter="url(#grain)" opacity=".6"/>
      <path d="M1209 1040l-4-50 13-43 35-24h70l20 30 17 35 10 52z" fill="#363a35" opacity=".9"/>
      <path d="M1209 1040l-4-50 13-43 35-24h75l22 30 12 35-4 52z" filter="url(#roofs)"/>
      <path d="M1822 1038l-6-20 8-16 20-18 25 4 12 14 20-4 18 4v36z" fill="#35332f" opacity=".9"/>
      <path d="M1822 1038l-6-20 8-16 20-18 25 4 12 14 20-4 18 4v36z" filter="url(#roofs)"/>
      <path d="M1360 923h340v116h-320z" filter="url(#spots)"/>
      <path d="M1388 962l30 20 26 38M1440 985l60 12 90 4M1500 930l10 40-10 30M1420 925l12 34-20 22" fill="none" stroke="#121d20" stroke-width="2" opacity=".7"/>
      <path d="M1261 921l-8 25-6 55-10 39M1270 980l40 22 45 36" fill="none" stroke="#655c55" stroke-width="3"/>
      <path d="M1253 923l-25 17-10 7-8 18-5 25v20l5 29" fill="none" stroke="#7f7466" stroke-width="6"/>
      <path d="M1236 928l-18 14-10 10-8 18-4 22 3 25 6 22" fill="none" stroke="#35504f" stroke-width="9" opacity=".8"/>
      <path d="M1207 934l4 8 10-2M1210 945l-6 10-12 10-5 14-3 20 3 16 14 24" fill="none" stroke="#7e8c8c" stroke-width="4"/>
      <path d="M1122 975l1 48h-2z" fill="#7a8294"/>
      <path d="M1818 606l28-12 16-14 20-9 37-24" fill="none" stroke="#4b4644" stroke-width="4"/>
      <path d="M1818 610l28-12 16-14 20-9 37-24" fill="none" stroke="#6a6660" stroke-width="1"/>
      <path d="M1920 660l-8 60-12 55-8 18M1912 668l-6 50-12 50-6 16" fill="none" stroke="#63505a" stroke-width="3"/>
      <path d="M1818 892l20-24 36-32M1818 880l18-18 28-26" fill="none" stroke="#6b5a62" stroke-width="2"/>
      <path d="M1783 923l-6 30-4 40 8 25 12 21M1791 923l-8 35-3 35 6 25 10 21" fill="none" stroke="#5c4f58" stroke-width="3"/>
      <path d="M1773 992l-14 12q-4 14 6 22 10 4 24-8l14-8c10-6 6-14-2-12-5 3 0 10 5 14l1 12-9 8" fill="none" stroke="#554c54" stroke-width="3"/>
      <path d="M1825 800l40 10 30 14 24 20M1870 920l49 24" fill="none" stroke="#4e4a44" stroke-width="1.500"/>
      <text x="915" y="957" class="credit">© 2024 Google</text><text x="1824" y="573" class="credit">© 2024 G</text>
    </svg>
  </section>
</main>

<footer class="status">
  <div class="locator"><svg viewBox="0 0 16 16"><circle cx="7" cy="6.500" r="4.500" fill="none" stroke="#555" stroke-width="1.300"/><path d="M10.500 10l4 4.500" stroke="#555" stroke-width="1.300"/></svg><input type="text" placeholder="Taper pour trouver (Ctrl+K)" aria-label="Taper pour trouver"></div>
  <label for="coord">Coordonnée</label><input class="field coord" id="coord" type="text" value="6142555 -2392226">
  <svg class="sicon" viewBox="0 0 16 16"><path d="M3 2q3-2 5 1l5 8q1 4-2 5-4 0-6-4L2 6z" fill="#777" stroke="#1c1c1c"/><path d="M2 7l8-4M4 10l8-4M6 13l7-4M13 3l2-2M12 6l3-1" stroke="#111" stroke-width="1.500"/></svg>
  <label class="push" for="scale">Échelle</label><div class="spin scale"><input id="scale" type="text" value="1:23335"><span class="combo"><i class="drop"></i></span></div>
  <svg class="sicon lock" viewBox="0 0 16 16"><path d="M4 8V5a4 4 0 018 0v3" fill="none" stroke="#484848" stroke-width="1.800"/><rect x="2" y="8" width="12" height="8" rx="1" fill="#3c3c3c"/></svg>
  <label for="mag">Loupe</label><div class="spin mag"><input id="mag" type="text" value="100%"><span class="steps"><button aria-label="Augmenter"></button><button aria-label="Diminuer"></button></span></div>
  <label for="rot">Rotation</label><div class="spin mag"><input id="rot" type="text" value="0,0 °"><span class="steps"><button aria-label="Augmenter"></button><button aria-label="Diminuer"></button></span></div>
  <label class="render"><input class="check" type="checkbox" checked>Rendu</label>
  <button class="crs"><svg viewBox="0 0 16 16"><path d="M8 1a6.500 6.500 0 016.500 6.500h-13A6.500 6.500 0 018 1zM1.500 8h13L8 15z" fill="#666" stroke="#444"/><path d="M8 1v14M5 2v9M11 2v9M1 6h14M3 10h10" stroke="#a0a0a0" stroke-width=".700"/></svg>EPSG:3857</button>
  <button class="msg" aria-label="Messages"><svg viewBox="0 0 18 18"><path d="M9 1c5 0 8 3 8 7 0 2-1 4-2 5l2 4-5-2c-6 1-11-2-11-7 0-4 3-7 8-7z" fill="#444"/><path d="M4.500 8h2M8 8h2M11.500 8h2" stroke="#aaa" stroke-width="2"/></svg></button>
</footer>

<div class="window sources">
  <header class="wtitle"><h2 class="title">Gestionnaire des sources de données | XYZ</h2><button class="round" aria-label="Fermer la fenêtre"><svg><use href="#i-close"/></svg></button></header>
  <div class="wbody">
    <nav class="side">
      <a href="#"><svg><use href="#i-folder"/></svg>Explorateur</a>
      <a href="#"><svg><use href="#i-vector"/><use href="#b-plus"/></svg>Vecteur</a>
      <a href="#"><svg><use href="#i-raster"/><use href="#b-plus"/></svg>Raster</a>
      <a href="#"><svg><use href="#i-mesh"/><use href="#b-plus"/></svg>Mesh</a>
      <a href="#"><svg><use href="#i-cloud"/><use href="#b-plus"/></svg>Nuage de points</a>
      <a href="#"><svg><use href="#i-comma"/><use href="#b-plus"/></svg>Texte Délimité</a>
      <a href="#"><svg><use href="#i-gpkg"/><use href="#b-plus"/></svg>GeoPackage</a>
      <a href="#"><svg><use href="#i-sat"/><use href="#b-plus"/></svg>GPS</a>
      <a href="#"><svg><use href="#i-feather"/><use href="#b-plus"/></svg>SpatiaLite</a>
      <a href="#"><svg><use href="#i-elephant"/><use href="#b-plus"/></svg>PostgreSQL</a>
      <a href="#"><svg><use href="#i-mssql"/><use href="#b-plus"/></svg>MSSQL</a>
      <a href="#"><svg><use href="#i-virtual"/><use href="#b-plus"/></svg>Couche virtuelle</a>
      <a href="#"><svg><use href="#i-hana"/><use href="#b-plus"/></svg>SAP HANA</a>
      <a href="#"><svg><use href="#i-world"/><use href="#b-plus"/></svg>WMS/WMTS</a>
      <a class="tall" href="#"><svg><use href="#i-wfs"/><use href="#b-plus"/></svg>WFS / OGC API - Features</a>
      <a href="#"><svg><use href="#i-worlddark"/><use href="#b-plus"/></svg>WCS</a>
      <a class="current" href="#"><svg><use href="#i-xyz"/><use href="#b-plus"/></svg>XYZ</a>
      <a href="#"><svg><use href="#i-vtile"/><use href="#b-plus"/></svg>Tuile vectorielle</a>
      <a href="#"><svg><use href="#i-arcgis"/><use href="#b-plus"/></svg>Serveur ArcGIS REST</a>
      <a href="#"><svg><use href="#i-geonode"/><use href="#b-plus"/></svg>GeoNode</a>
    </nav>
    <div class="content">
      <h3 class="heading">Connexions XYZ</h3>
      <div class="connbox">
        <div class="select"><select aria-label="Connexion"><option>Drone</option></select></div>
        <div class="row"><button class="btn"><span><u>N</u>ouveau</span></button><button class="btn right">Charger</button><button class="btn">Enregistrer</button></div>
      </div>
      <div class="row foot"><button class="btn std"><svg class="c-help"><use href="#i-help"/><text class="helptext" x="6" y="12">?</text></svg>Aide</button><button class="btn std right focus"><svg class="c-ok"><use href="#i-ok"/></svg><span><u>A</u>jouter</span></button><button class="btn std"><svg class="c-no"><use href="#i-no"/></svg><span><u>F</u>ermer</span></button></div>
    </div>
  </div>
</div>

<div class="window connection" role="dialog" aria-label="Connexion XYZ">
  <header class="wtitle"><h2 class="title">Connexion XYZ</h2><button class="round plain" aria-label="Fermer le dialogue"><svg><use href="#i-close"/></svg></button></header>
  <form class="form">
    <div class="row name"><label for="nom">Nom</label><input class="field grow" id="nom" type="text" value="Drone"></div>
    <h3 class="heading">Détails de connexion</h3>
    <div class="group">
      <div class="grid">
        <label for="url">URL</label><div class="urlbox"><input class="field active" id="url" type="text" value="http://ifremer.re:5004/wmts?request=GetTile&amp;tilematrix={z}&amp;tilerow={x}&amp;tilecol={y}"></div>
      </div>
      <h3 class="heading">Authentification</h3>
      <div class="group inner">
        <div class="tabs" role="tablist"><button class="tab sel" type="button" role="tab">Configurations</button><button class="tab" type="button" role="tab">De base</button></div>
        <div class="pane">
          <label for="auth">Choisir ou créer une configuration d'authentification</label>
          <div class="row tight"><div class="select auth"><select id="auth"><option>Pas d'authentification</option></select></div>
            <button class="mini" type="button" aria-label="Modifier" disabled><svg viewBox="0 0 16 16"><path d="M4 15l1-4 6-10 2 1-6 11z" fill="#dcdcd4" stroke="#cfcfc9" stroke-width=".700"/></svg></button>
            <button class="mini" type="button" aria-label="Supprimer la configuration" disabled><svg viewBox="0 0 16 16"><path d="M1.500 5.500h13v5h-13z" fill="none" stroke="#d3d3d3"/><path d="M3 8h10" stroke="#dccfd0" stroke-width="2"/></svg></button>
            <button class="mini" type="button" aria-label="Ajouter une configuration"><svg viewBox="0 0 16 16"><path d="M5.500 1.500h5v4h4v5h-4v4h-5v-4h-4v-5h4z" fill="#fff" stroke="#4f8a4f"/><path d="M8 3v10M3 8h10" stroke="#3f7a3f" stroke-width="2.200"/></svg></button>
          </div>
          <p class="note">Les configurations stockent les informations d'identification cryptées dans la base de données d'authentification QGIS.</p>
        </div>
      </div>
      <div class="grid lower">
        <label class="tick"><input class="check" type="checkbox" checked>Niveau de zoom min.</label>
        <div class="spin small"><input type="text" value="5" aria-label="Zoom minimal"><svg class="clear"><use href="#i-clear"/></svg><span class="steps"><button type="button" aria-label="Augmenter"></button><button type="button" aria-label="Diminuer"></button></span></div>
        <label class="tick"><input class="check" type="checkbox" checked>Niveau de zoom max.</label>
        <div class="spin small"><input type="text" value="23" aria-label="Zoom maximal"><svg class="clear"><use href="#i-clear"/></svg><span class="steps"><button type="button" aria-label="Augmenter"></button><button type="button" aria-label="Diminuer"></button></span></div>
        <label for="ref">En-tête HTTP Referer</label><input class="field" id="ref" type="text">
        <label class="indent" for="res">Résolution de la tuile</label><div class="select"><select id="res"><option>Standard (256x256 / 96 DPI)</option></select></div>
      </div>
    </div>
    <div class="row end"><button class="btn std" type="button"><svg class="c-help"><use href="#i-help"/><text class="helptext" x="6" y="12">?</text></svg>Aide</button><button class="btn std right" type="button"><svg class="c-no"><use href="#i-no"/></svg><span><u>A</u>nnuler</span></button><button class="btn std focus" type="button"><svg class="c-ok"><use href="#i-ok"/></svg><span><u>O</u>K</span></button></div>
  </form>
</div>
</body>
</html>
```
FILE: styles.css
```css
*, *::before, *::after { box-sizing: border-box; }

:root {
  --face: #a6a6a6;
  --face-top: #b0b0b0;
  --face-low: #a1a1a1;
  --base: #b0b0b0;
  --edge: #787878;
  --soft-edge: #959595;
  --arrow: #3c3c3c;
  --focus: #1c4f73;
  --dots: conic-gradient(from 270deg at 1px 1px, #828282 90deg, transparent 0) 0 0 / 3px 3px;
}

body {
  margin: 0;
  min-height: 100vh;
  display: flex;
  flex-direction: column;
  position: relative;
  overflow: hidden;
  background: var(--face);
  color: #000;
  font: 15px/20px "Open Sans", "Noto Sans", sans-serif;
}

button, input, select { font: inherit; color: inherit; margin: 0; }
button { padding: 0; border: 0; background: none; }
a { color: inherit; text-decoration: none; }
h1, h2, h3, p { margin: 0; font-size: inherit; }
u { text-underline-offset: 2px; }
svg { display: block; flex: none; }
.sprite { position: absolute; width: 0; height: 0; }

/* title bars */
.titlebar {
  height: 28px;
  display: grid;
  grid-template-columns: 1fr auto 1fr;
  align-items: start;
  background: #191919;
  border-bottom: 1px solid #101010;
  color: #acacac;
}
.title, .heading { font: 700 14px/20px "Noto Sans", sans-serif; }
.title { grid-column: 2; white-space: nowrap; }
.controls { grid-column: 3; justify-self: end; display: flex; gap: 12px; padding-right: 7px; }
.round {
  width: 22px;
  height: 22px;
  border-radius: 50%;
  background: #2a2a2a;
  color: #b5b5b5;
  display: grid;
  place-items: center;
}
.round svg { width: 16px; height: 16px; }
.controls .round { height: 20px; border-radius: 0 0 11px 11px; }
.round.plain { background: none; }

.menubar { height: 22px; display: flex; gap: 13px; padding: 0 10px; border-bottom: 1px solid #919191; }

/* toolbars */
.toolbar {
  height: 47px;
  display: flex;
  align-items: center;
  background: linear-gradient(#acacac, #a0a0a0);
  border-bottom: 1px solid #7c7c7c;
}
.toolbar:nth-of-type(n + 3) { background: linear-gradient(#b0b0b0, #a6a6a6); }
.tool { width: 41px; height: 39px; display: grid; place-items: center; border-radius: 3px; }
.tool svg { width: 32px; height: 32px; }
.tool.on { background: #989898; border: 1px solid #777; }
.tool.off svg { opacity: .3; filter: grayscale(.6); }
.letter { font: 16px "Noto Sans", sans-serif; fill: #222; }
.letter.bold { font-size: 14px; font-weight: 700; fill: #000; }
.tagtext { font: 700 11px "Noto Sans", sans-serif; fill: #222; }
.tagtext.red { fill: #b80000; }
.infotext { font: italic 700 19px "Liberation Serif", serif; fill: #ddd; }
.booktext { font: 23px "Liberation Serif", serif; fill: #cdd3da; }
.helptext { font: 11px "Noto Sans", sans-serif; fill: #dcecf5; }
.grip { width: 16px; height: 16px; flex: none; display: grid; justify-content: center; }
.grip::before { content: ""; width: 4px; background: var(--dots); }
.grip:first-child { width: 12px; }
.rule { width: 8px; height: 27px; display: grid; justify-content: center; }
.rule::before { content: ""; width: 1px; background: #8a8a8a; }
.drop { width: 12px; display: grid; place-items: center; flex: none; }
.drop::before {
  content: "";
  border: 4px solid transparent;
  border-top: 4px solid var(--arrow);
  border-bottom: 0;
}
.drop.off { opacity: .4; }

/* workspace */
.workspace { flex: 1; display: grid; grid-template-columns: 60px 471px 1fr; padding-top: 1px; }
.rail { border-right: 1px solid #808080; background: linear-gradient(90deg, #aeaeae, #a3a3a3); display: flex; flex-direction: column; }
.hgrip { height: 4px; margin: 4px 22px 3px; background: var(--dots); }
.railtool { width: 48px; height: 40px; display: grid; place-items: center; }
.railtool svg { width: 32px; height: 32px; }
.railrow { display: flex; align-items: center; }
.railrow .railtool { width: 44px; padding-left: 4px; }

.docks { display: flex; flex-direction: column; }
.docktitle { font-weight: 400; padding: 0 4px; }
.docktools { height: 36px; padding: 8px 9px; }
.docktools svg { width: 24px; height: 20px; }
.tree { flex: 1; border: 1px solid #808080; background: var(--base); display: flex; gap: 6px; padding: 2px 5px; align-items: flex-start; }
.tree .drop { height: 16px; }
.docktitle.low { padding: 6px 4px 9px; }
.props { display: grid; grid-template-columns: 228px 220px; grid-template-rows: 23px 48px 30px; padding: 0 8px 9px; align-items: center; }

.map { border: 1px solid #8a8a8a; background: #1c2628; position: relative; overflow: hidden; }
.mapdraw { position: absolute; inset: 0; width: 100%; height: 100%; }
.credit { font: 13px "Noto Sans", sans-serif; fill: #8a94b0; fill-opacity: .16; }

/* fields */
.check {
  appearance: none;
  width: 14px;
  height: 14px;
  flex: none;
  border: 1px solid var(--edge);
  background: var(--base);
  display: grid;
  place-items: center;
}
.check:checked::before {
  content: "";
  width: 10px;
  height: 10px;
  background: #111;
  clip-path: polygon(5% 50%, 25% 40%, 42% 65%, 78% 0, 100% 5%, 48% 100%, 36% 100%);
}
.field, .spin, .select select {
  height: 25px;
  border: 1px solid var(--edge);
  border-radius: 3px;
  background: var(--base);
  min-width: 0;
}
.field { padding: 0 2px; outline: 0; }
.spin { display: flex; align-items: stretch; overflow: hidden; }
.spin input { flex: 1; min-width: 0; border: 0; padding: 0 4px; background: none; outline: 0; }
.steps, .combo { width: 14px; border-left: 1px solid var(--edge); display: grid; grid-template-rows: 1fr 1fr; justify-items: center; align-items: center; }
.steps button { width: 8px; height: 4px; background: #4a4a4a; clip-path: polygon(50% 0, 100% 100%, 0 100%); }
.steps button + button { clip-path: polygon(0 0, 100% 0, 50% 100%); }
.spin.wide { height: 23px; }
.combo { width: 20px; grid-template-rows: 1fr; background: #a3a3a3; }
.select { position: relative; display: grid; }
.select select { appearance: none; width: 100%; padding: 0 18px 0 4px; background: linear-gradient(var(--face-top), var(--face-low)); }
.select::after {
  content: "";
  position: absolute;
  right: 7px;
  top: 11px;
  border: 4px solid transparent;
  border-top-color: var(--arrow);
  border-bottom: 0;
}
.btn {
  height: 25px;
  padding: 0 6px;
  display: flex;
  align-items: center;
  justify-content: center;
  gap: 2px;
  border: 1px solid var(--edge);
  border-radius: 3px;
  background: linear-gradient(var(--face-top), var(--face-low));
  white-space: nowrap;
}
.btn svg { width: 16px; height: 16px; }
.btn.std { width: 80px; padding: 0; }
.btn.focus { border-color: var(--focus); }
.row { display: flex; align-items: center; gap: 6px; }
.right { margin-left: auto; }
.grow { flex: 1; }

/* status bar */
.status { height: 31px; display: flex; align-items: center; gap: 4px; padding: 0 6px 0 4px; font-family: "Noto Sans", sans-serif; font-size: 12px; }
.locator { width: 331px; height: 25px; margin-right: auto; display: flex; align-items: center; gap: 5px; padding: 0 6px; border: 1px solid var(--edge); border-radius: 3px; background: var(--base); font-family: "Open Sans", sans-serif; font-size: 15px; }
.locator svg { width: 16px; height: 16px; }
.locator input { flex: 1; border: 0; padding: 0; background: none; }
.locator input::placeholder { color: #5c5c5c; opacity: 1; }
.status .field, .status .spin { height: 24px; }
.coord { width: 121px; text-align: center; }
.sicon { width: 16px; height: 16px; }
.push { padding-left: 8px; }
.scale { width: 97px; }
.lock { margin: 0 2px 0 7px; }
.mag { width: 94px; margin-right: 5px; }
.render { display: flex; align-items: center; gap: 5px; }
.crs { display: flex; align-items: center; gap: 3px; margin: 0 18px 0 9px; }
.crs svg { width: 15px; height: 15px; }
.msg svg { width: 18px; height: 18px; }

/* floating windows */
.window { position: absolute; border: 1px solid #161616; border-radius: 12px 12px 0 0; background: var(--face); box-shadow: 0 6px 22px rgba(0, 0, 0, .45); }
.wtitle { height: 37px; display: grid; grid-template-columns: 1fr auto 1fr; align-items: center; border-radius: 11px 11px 0 0; background: #191919; color: #adadad; border-top: 1px solid #262626; }
.wtitle .round { grid-column: 3; justify-self: end; margin-right: 7px; }
.sources { top: 139px; left: 102px; right: 102px; }
.wbody { display: grid; grid-template-columns: 217px 1fr; }
.side { background: #404040; color: #b2b2b2; padding: 1px 0 19px; }
.side a { height: 36px; display: flex; align-items: center; gap: 6px; padding-left: 3px; white-space: nowrap; }
.side svg { width: 28px; height: 28px; }
.side .tall { height: 42px; padding-bottom: 6px; }
.side .current { background: var(--face); color: #000; padding-left: 6px; }
.content { display: flex; flex-direction: column; padding: 4px 3px 3px 4px; min-width: 0; }
.content .heading { padding-left: 2px; }
.connbox { border: 1px solid var(--soft-edge); border-radius: 2px; background: #a3a3a3; height: 84px; padding: 10px 11px; display: grid; gap: 9px; align-content: start; }
.foot { margin-top: auto; }
.c-help { color: #22709c; }
.c-ok { color: #0a6416; }
.c-no { color: #98101f; }

.connection {
  --face: #efefef;
  --face-top: #fefefe;
  --face-low: #ededed;
  --base: #fff;
  --edge: #ababab;
  --soft-edge: #d3d3d3;
  --arrow: #555;
  --focus: #2a6b96;
  top: 187px;
  left: 404px;
  right: 404px;
  box-shadow: 0 8px 26px rgba(0, 0, 0, .6);
}
.connection .wtitle { background: #2c2c2c; color: #c0c0c0; border-top-color: #3c3c3c; }
.connection .c-help { color: #2f9fe0; }
.connection .c-ok { color: #118422; }
.connection .c-no { color: #c8142c; }
.form { padding: 11px; }
.name { gap: 5px; margin-bottom: 7px; }
.name + .heading { padding-left: 2px; }
.group { border: 1px solid var(--soft-edge); border-radius: 2px; background: #ebebeb; padding: 10px 11px; }
.grid { display: grid; grid-template-columns: 175px 1fr; align-items: center; }
.urlbox { display: grid; position: relative; }
.urlbox::after { content: ""; position: absolute; left: 118px; top: 4px; width: 1px; height: 17px; background: #000; }
.active { border-color: #2a6b96; }
.group .heading { padding: 0 2px; margin-top: 7px; }
.inner { background: #e7e7e7; padding: 6px 8px 10px; }
.tabs { display: flex; align-items: flex-end; }
.tab { height: 26px; padding: 0 12px; border: 1px solid #b8b8b8; border-left: 0; border-bottom: 0; background: #e4e4e4; border-radius: 0 2px 0 0; }
.tab.sel { height: 29px; margin-bottom: -1px; padding: 0 10px; border-left: 1px solid #b0b0b0; border-radius: 2px 2px 0 0; background: #fcfcfc; position: relative; }
.pane { min-height: 298px; border: 1px solid #ababab; background: #fcfcfc; padding: 6px 7px; display: flex; flex-direction: column; }
.tight { margin-top: 4px; }
.auth { width: 180px; }
.mini { width: 24px; height: 24px; border: 1px solid var(--edge); border-radius: 3px; display: grid; place-items: center; background: linear-gradient(#fff, #eee); }
.mini:disabled { border-color: #ccc; }
.mini svg { width: 16px; height: 16px; }
.note { margin: auto 0; padding-bottom: 18px; }
.lower { row-gap: 7px; margin-top: 7px; }
.tick { display: flex; align-items: center; gap: 5px; white-space: nowrap; }
.small { width: 73px; height: 24px; }
.clear { width: 14px; height: 12px; align-self: center; margin-right: 11px; }
.indent { padding-left: 3px; }
.end { margin-top: 6px; padding-bottom: 1px; }
```
